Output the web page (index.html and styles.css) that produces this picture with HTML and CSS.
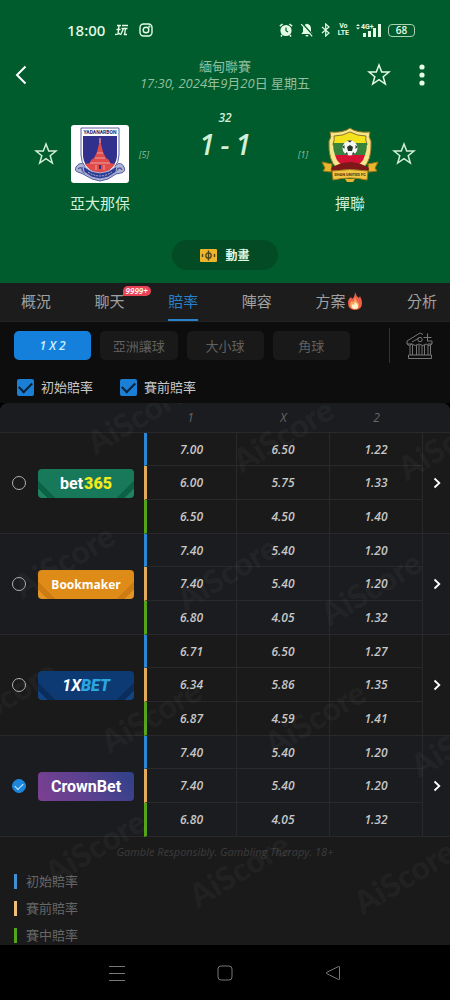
FILE: index.html
```
<!DOCTYPE html>
<html lang="zh-Hant">
<head>
    <meta charset="UTF-8">
    <meta name="viewport" content="width=device-width, initial-scale=1.0">
    <title>亞大那保 - 撣聯 賠率</title>
    <link rel="stylesheet" href="styles.css">
</head>
<body>
    <!-- 共用圖示 -->
    <svg class="symbols" width="0" height="0" aria-hidden="true">
        <symbol id="star" viewBox="0 0 24 24">
            <path d="M12 2l2.700 7h7.300l-5.800 4.700 2.100 7.300-6.300-4.300L5.700 21l2.100-7.300L2 9h7.300z" fill="none" stroke="currentColor" stroke-width="1.500"/>
        </symbol>
        <symbol id="arrow" viewBox="0 0 8 12">
            <path d="M1.500 1.500L6.300 6l-4.800 4.500" fill="none" stroke="currentColor" stroke-width="1.800"/>
        </symbol>
    </svg>

    <!-- 頂部 -->
    <header class="header">
        <div class="status">
            <div class="status_left">
                <span class="time">18:00</span>
                <svg width="14" height="12" viewBox="0 0 14 12" fill="none" stroke="currentColor" stroke-width="1.400"><path d="M2 1.500h4M1.500 5.500h4M4 1.500L3 10M0 10.500l5-1M7 1.500h6M6.500 4.500h6M8.500 4.500L5.500 11M10.500 4.500L9.500 10.500h2.500"/></svg>
                <svg width="14" height="14" viewBox="0 0 14 14" fill="none" stroke="currentColor" stroke-width="1.400"><rect x="1" y="1" width="12" height="12" rx="3.500"/><circle cx="7" cy="7" r="2.800"/><circle cx="10.300" cy="3.700" r=".4"/></svg>
            </div>
            <div class="status_right">
                <svg width="14" height="14" viewBox="0 0 14 14"><circle cx="7" cy="7.500" r="5.600" fill="currentColor"/><path d="M.8 3.200L3.600 1M13.200 3.200L10.400 1M3 12l-1 1.500M11 12l1 1.500" stroke="currentColor" stroke-width="1.500"/><path d="M7 4.500v3.200l2 1.300" fill="none" stroke="#005c2d" stroke-width="1.200"/></svg>
                <svg width="14" height="14" viewBox="0 0 14 14"><path d="M7 .8c-2.800.5-4 2.500-4 5v3L1.300 11h11.400L11 8.800v-3c0-2.500-1.200-4.500-4-5zM5.500 12h3a1.500 1.500 0 0 1-3 0z" fill="currentColor"/><path d="M2.600.8l10.800 12" stroke="#005c2d" stroke-width="1.500"/><path d="M1.200 1.200l11 12.200" stroke="currentColor" stroke-width="1.200"/></svg>
                <svg width="10" height="14" viewBox="0 0 10 14" fill="none" stroke="currentColor" stroke-width="1.200"><path d="M1 4l7 6-3.300 3V1L8 4l-7 6"/></svg>
                <span class="volte">Vo<br>LTE</span>
                <svg width="25" height="14" viewBox="0 0 25 14" fill="currentColor"><path d="M0 3l2-2 2 2zM0 4.500h4l-2 2zM7 10h3v4H7zM12 8h3v6h-3zM17 5h3v9h-3zM22 1h3v13h-3z"/><text x="5" y="6" class="net">4G+</text></svg>
                <span class="battery">68</span>
            </div>
        </div>

        <div class="title_bar">
            <button class="icon_btn back" aria-label="返回"><svg width="12" height="20" viewBox="0 0 12 20" fill="none" stroke="currentColor" stroke-width="2"><path d="M10.500 1.500L2 10l8.500 8.500"/></svg></button>
            <div class="title">
                <h1>緬甸聯賽</h1>
                <p><i>17:30, 2024</i>年<i>9</i>月<i>20</i>日 星期五</p>
            </div>
            <div class="title_right">
                <button class="icon_btn" aria-label="收藏"><svg width="24" height="24"><use href="#star"/></svg></button>
                <button class="icon_btn" aria-label="更多"><svg width="6" height="22" viewBox="0 0 6 22" fill="currentColor"><circle cx="3" cy="3" r="2.600"/><circle cx="3" cy="11" r="2.600"/><circle cx="3" cy="19" r="2.600"/></svg></button>
            </div>
        </div>

        <!-- 比分 -->
        <div class="match">
            <div class="team">
                <button class="icon_btn side" aria-label="收藏亞大那保"><svg width="24" height="24"><use href="#star"/></svg></button>
                <div class="club">
                    <svg class="badge" viewBox="0 0 58 58">
                        <rect width="58" height="58" rx="3" fill="#fff"/>
                        <path d="M5 42q4-6 9-2l4 7 11 7 11-7 5-7q5-4 8 2 2 5-3 6l-5 1-8 5-8 2-8-2-9-5-5-2q-4-1-2-5z" fill="#aeb4d4" stroke="#525ca1"/>
                        <path d="M7 44q3-3 5 1M46 45q3-4 5 0M12 42q-3 3 2 6M45 42q3 3-2 6" fill="none" stroke="#525ca1" stroke-width="1.500"/>
                        <path d="M10 3h38v27q0 14-19 23Q10 44 10 30z" fill="#fff" stroke="#5860a0"/>
                        <path d="M12 11h34v19q0 13-17 20-17-7-17-20z" fill="#31318d"/>
                        <path d="M29 12l1 7 2 8 3 6 3 2 1 3 5 1q-4 7-15 10Q18 46 14 39l5-1 1-3 3-2 3-6 2-8z" fill="#e14c4b"/>
                        <path d="M29 13v5M26 28h6M24 33h10M19 38h20M25 40v5M33 40v5" stroke="#efa0a0" stroke-width="1"/>
                        <path d="M28 40h2v4h-2z" fill="#31318d"/>
                        <path d="M12 41q17 14 34 0l-1 6q-16 14-32 0z" fill="#2d3c94" stroke="#aeb4d4"/>
                        <path d="M17 47q12 8 24 0" fill="none" stroke="#aeb4d4" stroke-dasharray="2 1"/>
                        <text x="29" y="9" class="badge_name" fill="#24296f">YADANARBON</text>
                    </svg>
                    <h2>亞大那保</h2>
                </div>
                <span class="rank side">[5]</span>
            </div>
            <div class="score_box">
                <span class="minute">32</span>
                <div class="score"><span>1</span><span>-</span><span>1</span></div>
            </div>
            <div class="team">
                <span class="rank side">[1]</span>
                <div class="club">
                    <svg class="badge" viewBox="0 0 58 58">
                        <path d="M29 3q6 5 20 4-2 5 1 9 1 20-8 27-5 3-13 5-8-2-13-5-9-7-8-27 3-4 1-9 14 1 20-4z" fill="#f7e58a" stroke="#8d7526"/>
                        <path d="M29 7q7 4 16 4-1 4 1 8v1H12v-1q2-4 1-8 9 0 16-4z" fill="#f4e31c" stroke="#8d7526"/>
                        <path d="M12 18h34q0 7-2 12H14q-2-5-2-12z" fill="#38823e"/>
                        <path d="M14 30h30q-2 10-15 13-13-3-15-13z" fill="#d51235"/>
                        <circle cx="29" cy="23" r="7.500" fill="#f4f7f2"/>
                        <path d="M29 20l3 2-1 4h-4l-1-4zM26 15.500h5l-2 2zM21.500 22l2-2v4zM36.500 22l-2-2v4zM24 29l2-2 1 3zM34 29l-2-2-1 3z" fill="#243127"/>
                        <path d="M1 37l10 2-1 8-8-1 2-3zM57 37l-10 2 1 8 8-1-2-3z" fill="#e9b62d" stroke="#9c7516"/>
                        <path d="M10 43q19-12 38 0l-2 5q-17-5-34 0z" fill="#7d1718"/>
                        <path d="M11 46q18-3 36 0l-1 9q-17-4-34 0z" fill="#f0c644" stroke="#a07b1b"/>
                        <path d="M24 54h10l-2 3h-6z" fill="#e9b62d"/>
                        <text x="29" y="51" class="badge_name small" fill="#4f3510">SHAN UNITED FC</text>
                    </svg>
                    <h2>撣聯</h2>
                </div>
                <button class="icon_btn side" aria-label="收藏撣聯"><svg width="24" height="24"><use href="#star"/></svg></button>
            </div>
        </div>

        <button class="live_btn">
            <svg width="17" height="13" viewBox="0 0 17 13"><rect width="17" height="13" rx="1" fill="#edb52d"/><path d="M8.500 1.500v10M2.500 5v3M14.500 5v3" fill="none" stroke="#4d4217" stroke-width="1.400"/><circle cx="8.500" cy="6.500" r="2.700" fill="none" stroke="#4d4217" stroke-width="1.300"/></svg>
            動畫
        </button>
    </header>

    <!-- 選項卡 -->
    <nav class="tabs">
        <a href="#">概況</a>
        <a href="#">聊天<em class="count">9999+</em></a>
        <a href="#" class="current">賠率</a>
        <a href="#">陣容</a>
        <a href="#">方案<svg width="16" height="18" viewBox="0 0 16 18"><path d="M8 0q1 4 4 6l1-2q2 4 2 7 0 7-7 7t-7-7q0-4 3-6l1 2q3-2 3-7z" fill="#ee6047"/><path d="M8 5q1 4 4 7 0 5-4 5t-5-4q0-3 2-4l1 1q2-2 2-5z" fill="#f9a35c"/><path d="M8 10q4 3 3 6-3 2-6 0-1-3 1-4l1 1z" fill="#fff0c9"/></svg></a>
        <a href="#">分析</a>
    </nav>

    <!-- 篩選 -->
    <section class="filter">
        <div class="filter_row">
            <div class="types">
                <button class="type on">1 X 2</button>
                <button class="type">亞洲讓球</button>
                <button class="type">大小球</button>
                <button class="type">角球</button>
            </div>
            <button class="icon_btn company" aria-label="公司">
                <svg width="28" height="28" viewBox="0 0 28 28" fill="none" stroke="currentColor" stroke-width="1"><path d="M17 2.500L14 1 1 9v3h5M22 9h4v3h-4M21.500 1.500v8M17.500 5.500h8M4 13v10M6.500 13v10M10.500 13v10M13 13v10M16 13v10M18.500 13v10M22 13v10M24.500 13v10M2.500 23h23v3.500h-23zM1 12q2 3 5 0 3 3 7 0 4 3 7 0 3 3 6 0M6 10l7-4"/><circle cx="14" cy="7.500" r="2.200"/></svg>
            </button>
        </div>
        <div class="checks">
            <label><input type="checkbox" checked>初始賠率</label>
            <label><input type="checkbox" checked>賽前賠率</label>
        </div>
    </section>

    <!-- 賠率表 -->
    <main class="odds">
        <table>
            <thead>
                <tr><th class="col_name"></th><th>1</th><th>X</th><th>2</th><th class="col_more"></th></tr>
            </thead>
            <tbody>
                <tr>
                    <td rowspan="3"><label class="maker"><input type="radio" name="maker"><span class="logo bet365">bet<b>365</b></span></label></td>
                    <td class="first">7.00</td><td>6.50</td><td>1.22</td>
                    <td rowspan="3"><button class="icon_btn more" aria-label="bet365 詳情"><svg width="8" height="12"><use href="#arrow"/></svg></button></td>
                </tr>
                <tr><td class="before">6.00</td><td>5.75</td><td>1.33</td></tr>
                <tr><td class="live">6.50</td><td>4.50</td><td>1.40</td></tr>
            </tbody>
            <tbody>
                <tr>
                    <td rowspan="3"><label class="maker"><input type="radio" name="maker"><span class="logo bookmaker">Bookmaker</span></label></td>
                    <td class="first">7.40</td><td>5.40</td><td>1.20</td>
                    <td rowspan="3"><button class="icon_btn more" aria-label="Bookmaker 詳情"><svg width="8" height="12"><use href="#arrow"/></svg></button></td>
                </tr>
                <tr><td class="before">7.40</td><td>5.40</td><td>1.20</td></tr>
                <tr><td class="live">6.80</td><td>4.05</td><td>1.32</td></tr>
            </tbody>
            <tbody>
                <tr>
                    <td rowspan="3"><label class="maker"><input type="radio" name="maker"><span class="logo xbet">1X<b>BET</b></span></label></td>
                    <td class="first">6.71</td><td>6.50</td><td>1.27</td>
                    <td rowspan="3"><button class="icon_btn more" aria-label="1XBET 詳情"><svg width="8" height="12"><use href="#arrow"/></svg></button></td>
                </tr>
                <tr><td class="before">6.34</td><td>5.86</td><td>1.35</td></tr>
                <tr><td class="live">6.87</td><td>4.59</td><td>1.41</td></tr>
            </tbody>
            <tbody>
                <tr>
                    <td rowspan="3"><label class="maker"><input type="radio" name="maker" checked><span class="logo crown">CrownBet</span></label></td>
                    <td class="first">7.40</td><td>5.40</td><td>1.20</td>
                    <td rowspan="3"><button class="icon_btn more" aria-label="CrownBet 詳情"><svg width="8" height="12"><use href="#arrow"/></svg></button></td>
                </tr>
                <tr><td class="before">7.40</td><td>5.40</td><td>1.20</td></tr>
                <tr><td class="live">6.80</td><td>4.05</td><td>1.32</td></tr>
            </tbody>
        </table>

        <p class="notice">Gamble Responsibly. Gambling Therapy. 18+</p>
        <ul class="legend">
            <li class="first">初始賠率</li>
            <li class="before">賽前賠率</li>
            <li class="live">賽中賠率</li>
        </ul>

        <!-- 浮水印 -->
        <svg class="watermark" aria-hidden="true">
            <text transform="translate(143 24) rotate(-31)">AiScore</text>
            <text transform="translate(289 42) rotate(-31)">AiScore</text>
            <text transform="translate(454 50) rotate(-31)">AiScore</text>
            <text transform="translate(70 168) rotate(-31)">AiScore</text>
            <text transform="translate(233 180) rotate(-31)">AiScore</text>
            <text transform="translate(377 195) rotate(-31)">AiScore</text>
            <text transform="translate(12 304) rotate(-31)">AiScore</text>
            <text transform="translate(157 323) rotate(-31)">AiScore</text>
            <text transform="translate(321 325) rotate(-31)">AiScore</text>
            <text transform="translate(467 347) rotate(-31)">AiScore</text>
            <text transform="translate(101 454) rotate(-31)">AiScore</text>
            <text transform="translate(245 477) rotate(-31)">AiScore</text>
            <text transform="translate(410 484) rotate(-31)">AiScore</text>
        </svg>
    </main>

    <!-- 系統導航 -->
    <footer class="sys_nav">
        <button class="icon_btn" aria-label="選單"><svg width="16" height="16" viewBox="0 0 16 16" stroke="currentColor"><path d="M0 1.500h16M0 8.500h16M0 15.500h16"/></svg></button>
        <button class="icon_btn" aria-label="主頁"><svg width="16" height="16" viewBox="0 0 16 16" fill="none" stroke="currentColor"><rect x="1" y="1" width="14" height="14" rx="3"/></svg></button>
        <button class="icon_btn" aria-label="返回上頁"><svg width="16" height="16" viewBox="0 0 16 16" fill="none" stroke="currentColor"><path d="M14.500 2v12q0 1-1 .5L1.500 8.500q-1-.5 0-1l12-6q1-.5 1 .5z"/></svg></button>
    </footer>
</body>
</html>
```
FILE: styles.css
```
*{
    margin: 0;
    padding: 0;
    box-sizing: border-box;
}
body{
    min-height: 100vh;
    display: flex;
    flex-direction: column;
    background-color: #000;
    color: #c8c8c8;
    font-family: "Open Sans", "Noto Sans CJK TC", sans-serif;
    font-size: 13px;
}
a{
    color: inherit;
    text-decoration: none;
}
button{
    border: none;
    font-family: inherit;
    cursor: pointer;
}
svg{
    display: block;
    flex-shrink: 0;
}
.symbols{
    position: absolute;
}
.icon_btn{
    background: none;
    color: inherit;
}

/* 頂部 */
.header{
    padding-bottom: 13px;
    background-color: #005c2d;
    color: #d3f0d6;
}
.status{
    display: flex;
    justify-content: space-between;
    align-items: center;
    padding: 20px 35px 0 67px;
    height: 40px;
    color: #e4fbe6;
}
.status_left{
    display: flex;
    align-items: center;
    gap: 10px;
}
.time{
    font-family: "Noto Sans", sans-serif;
    font-size: 15px;
    font-weight: 500;
    line-height: 20px;
}
.status_right{
    display: flex;
    align-items: center;
    gap: 7px;
}
.volte{
    font-family: Roboto, sans-serif;
    font-size: 7px;
    font-weight: bold;
    line-height: 7px;
    text-align: center;
}
.net{
    font-family: Roboto, sans-serif;
    font-size: 7px;
    font-weight: bold;
}
.battery{
    width: 27px;
    height: 13px;
    border: 1px solid #a9d2b2;
    border-radius: 4px;
    font-size: 10px;
    font-weight: 600;
    line-height: 11px;
    text-align: center;
}
.title_bar{
    display: grid;
    grid-template-columns: 1fr auto 1fr;
    align-items: center;
    height: 70px;
    padding: 0 25px 0 15px;
}
.back{
    justify-self: start;
    color: #fff;
}
.title{
    padding-left: 10px;
    text-align: center;
    color: #92bf9e;
    line-height: 17px;
}
.title h1{
    font-size: 13px;
    font-weight: normal;
}
.title p{
    font-size: 13px;
}
.title_right{
    display: flex;
    align-items: center;
    justify-self: end;
    gap: 28px;
    color: #e4fbe6;
}
.match{
    display: flex;
    justify-content: space-between;
    padding: 0 34px;
    height: 130px;
}
.team{
    display: flex;
    padding-top: 15px;
}
.side{
    display: flex;
    align-items: center;
    height: 58px;
}
.club{
    display: flex;
    flex-direction: column;
    align-items: center;
    width: 58px;
    margin: 0 10px 0 13px;
}
.team:last-child .club{
    margin: 0 13px 0 10px;
}
.badge{
    width: 58px;
    height: 58px;
}
.badge_name{
    font-family: Roboto, sans-serif;
    font-size: 5px;
    font-weight: bold;
    text-anchor: middle;
}
.badge_name.small{
    font-size: 4px;
}
.club h2{
    margin-top: 9px;
    font-size: 15px;
    font-weight: normal;
    line-height: 22px;
    white-space: nowrap;
}
.rank{
    width: 13px;
    font-size: 9px;
    font-style: italic;
    color: #92bf9e;
}
.score_box{
    text-align: center;
}
.minute{
    display: block;
    font-size: 12px;
    font-style: italic;
    font-weight: 600;
    line-height: 16px;
}
.score{
    display: flex;
    gap: 6px;
    font-size: 28px;
    font-style: italic;
    font-weight: 600;
    line-height: 36px;
}
.live_btn{
    display: flex;
    align-items: center;
    justify-content: center;
    gap: 8px;
    width: 106px;
    height: 30px;
    margin: 0 auto;
    border-radius: 15px;
    background-color: #034b24;
    color: #e4fbe6;
    font-size: 12px;
    font-weight: bold;
}

/* 選項卡 */
.tabs{
    display: flex;
    justify-content: space-between;
    height: 39px;
    padding: 0 13px 0 21px;
    background-color: #1c1c1c;
    border-bottom: 1px solid #242424;
    color: #a0a0a0;
    font-size: 15px;
    line-height: 38px;
}
.tabs a{
    position: relative;
    display: flex;
    align-items: center;
    gap: 2px;
    border-bottom: 2px solid transparent;
    white-space: nowrap;
}
.tabs .current{
    color: #2980cb;
    border-bottom-color: #2980cb;
}
.count{
    position: absolute;
    top: 3px;
    left: 28px;
    padding: 0 3px;
    border-radius: 5px 5px 5px 0;
    background-color: #e84455;
    color: #fff;
    font-size: 8px;
    font-weight: 600;
    line-height: 10px;
}

/* 篩選 */
.filter{
    padding-bottom: 6px;
    background-color: #0d0d0d;
}
.filter_row{
    display: flex;
    align-items: center;
    padding: 6px 16px 0 14px;
}
.types{
    flex: 1;
    display: flex;
    gap: 9px;
    margin-right: 39px;
}
.type{
    flex: 1;
    height: 29px;
    border-radius: 5px;
    background-color: #191919;
    color: #606060;
    font-size: 13px;
    white-space: nowrap;
}
.type.on{
    background-color: #1480dc;
    color: #c9f0ff;
    font-size: 12px;
    font-style: italic;
    font-weight: 600;
}
.company{
    height: 35px;
    padding-left: 16px;
    border-left: 1px solid #333;
    color: #777;
}
.checks{
    display: flex;
    gap: 27px;
    padding: 14px 17px 0;
}
.checks label{
    display: flex;
    align-items: center;
    gap: 7px;
    line-height: 20px;
}
.checks input{
    appearance: none;
    display: flex;
    align-items: center;
    justify-content: center;
    width: 17px;
    height: 17px;
    border-radius: 2px;
    background-color: #1b7fd6;
}
.checks input:checked::before{
    content: "";
    width: 11px;
    height: 6px;
    margin-bottom: 3px;
    border-left: 2px solid #0b2138;
    border-bottom: 2px solid #0b2138;
    transform: rotate(-45deg);
}

/* 賠率表 */
.odds{
    position: relative;
    flex: 1;
    overflow: hidden;
    border-radius: 8px 8px 0 0;
    background-color: #1a1a1a;
}
table{
    width: 100%;
    table-layout: fixed;
    border-spacing: 0;
    font-size: 12px;
    text-align: center;
}
.col_name{
    width: 32%;
}
.col_more{
    width: 6%;
}
th{
    height: 30px;
    background-color: #1b1c20;
    border-bottom: 1px solid #29292b;
    color: #666;
    font-style: italic;
    font-weight: normal;
}
tbody:nth-child(odd){
    background-color: #1b1c20;
}
td{
    height: 34px;
    border-right: 1px solid #29292b;
    border-bottom: 1px solid #29292b;
    font-style: italic;
    font-weight: 600;
}
tbody tr:first-child td{
    height: 33px;
}
td[rowspan]{
    border-right: none;
    font-style: normal;
}
td.first{
    border-left: 3px solid #2b87d3;
}
td.before{
    border-left: 3px solid #e2ab5b;
}
td.live{
    border-left: 3px solid #55a318;
}
.maker{
    position: relative;
    z-index: 1;
    display: flex;
    align-items: center;
    gap: 12px;
    padding: 0 10px 0 12px;
}
.maker input{
    appearance: none;
    display: flex;
    align-items: center;
    justify-content: center;
    flex-shrink: 0;
    width: 14px;
    height: 14px;
    border: 1px solid #b0b0b0;
    border-radius: 50%;
}
.maker input:checked{
    border-color: #1b86dc;
    background-color: #1b86dc;
}
.maker input:checked::before{
    content: "";
    width: 7px;
    height: 4px;
    margin-bottom: 2px;
    border-left: 1px solid #d9f0ff;
    border-bottom: 1px solid #d9f0ff;
    transform: rotate(-45deg);
}
.logo{
    flex: 1;
    height: 29px;
    border-radius: 4px;
    color: #fff;
    font-family: Roboto, sans-serif;
    font-size: 16px;
    font-weight: bold;
    line-height: 30px;
}
.bet365{
    background: linear-gradient(45deg, #1f8260 8%, #0c6247 8%, #0c6247 14%, transparent 14%),
        linear-gradient(-45deg, #1f8260 8%, #0c6247 8%, #0c6247 14%, #17785a 14%);
}
.bet365 b{
    margin-left: 1px;
    color: #f2ea1c;
}
.bookmaker{
    background: linear-gradient(45deg, #e39424 8%, #cc7c12 8%, #cc7c12 14%, transparent 14%),
        linear-gradient(-45deg, #e39424 8%, #cc7c12 8%, #cc7c12 14%, #df8b17 14%);
    font-family: "Open Sans", sans-serif;
    font-size: 12px;
}
.xbet{
    background: linear-gradient(45deg, #144480 8%, #0a2d5c 8%, #0a2d5c 14%, transparent 14%),
        linear-gradient(-45deg, #144480 8%, #0a2d5c 8%, #0a2d5c 14%, #0e3a74 14%);
    font-style: italic;
}
.xbet b{
    color: #2aa6e0;
}
.crown{
    background: linear-gradient(60deg, #7d3f91, #5b4190 50%, #2f4189);
}
.more{
    display: flex;
    justify-content: center;
    width: 100%;
    color: #fff;
}
.notice{
    margin-top: 7px;
    color: #3c3c3c;
    font-size: 11px;
    font-style: italic;
    line-height: 16px;
    text-align: center;
}
.legend{
    display: flex;
    flex-direction: column;
    gap: 12px;
    padding: 14px 14px 2px;
    list-style: none;
    color: #666;
    line-height: 15px;
}
.legend li{
    padding-left: 9px;
    border-left: 3px solid;
}
.legend .first{
    border-image: linear-gradient(#3f8fd6, #3f8fd6) 1;
}
.legend .before{
    border-image: linear-gradient(#eec07a, #eec07a) 1;
}
.legend .live{
    border-image: linear-gradient(#55a318, #55a318) 1;
}
.watermark{
    position: absolute;
    top: 0;
    left: 0;
    width: 100%;
    height: 100%;
    pointer-events: none;
    fill: #fff;
    fill-opacity: .05;
    font-family: Lato, sans-serif;
    font-size: 32px;
    font-weight: 900;
    text-anchor: middle;
}

/* 系統導航 */
.sys_nav{
    display: flex;
    justify-content: center;
    align-items: center;
    gap: 92px;
    height: 55px;
    background-color: #000;
    color: #777;
}
```
